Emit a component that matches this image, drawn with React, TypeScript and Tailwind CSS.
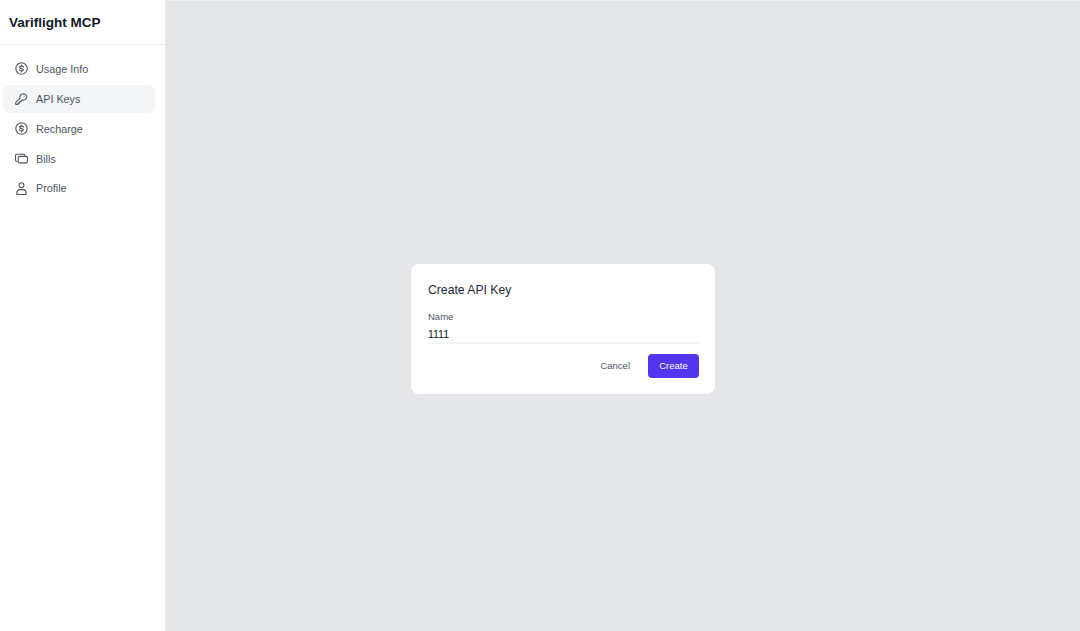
const DollarIcon = () => (
  <svg width="13" height="13" viewBox="0 0 24 24" fill="none" stroke="currentColor" strokeWidth="2" strokeLinecap="round" strokeLinejoin="round">
    <circle cx="12" cy="12" r="10.500" />
    <path strokeWidth="2.200" d="M15.500 9.300c-.5-1.100-1.800-1.800-3.500-1.800-2 0-3.500.9-3.500 2.300 0 3.200 7 1.400 7 4.500 0 1.400-1.500 2.200-3.500 2.200-1.800 0-3.100-.7-3.500-1.900M12 5.500v2M12 16.500v2" />
  </svg>
)

const KeyIcon = () => (
  <svg width="13" height="13" viewBox="0 0 24 24" fill="none" stroke="currentColor" strokeWidth="2" strokeLinecap="round" strokeLinejoin="round">
    <path d="M22 8.500a6.500 6.500 0 0 1-8.400 6.200L11 17.500H8.500v3h-3V23H1.500v-3.800l7.800-7.800A6.500 6.500 0 1 1 22 8.500Z" />
    <path d="M17 7.500h.01" />
  </svg>
)

const CardsIcon = () => (
  <svg width="13" height="13" viewBox="0 0 24 24" fill="none" stroke="currentColor" strokeWidth="2" strokeLinecap="round" strokeLinejoin="round">
    <path d="M4 17H3a2 2 0 0 1-2-2V6a2 2 0 0 1 2-2h13a2 2 0 0 1 2 2v1" />
    <rect x="6" y="8" width="17" height="12" rx="2.500" />
  </svg>
)

const UserIcon = () => (
  <svg width="13" height="13" viewBox="0 0 24 24" fill="none" stroke="currentColor" strokeWidth="2" strokeLinecap="round" strokeLinejoin="round">
    <circle cx="12" cy="6" r="4.500" />
    <path d="M3.500 23v-3a6 6 0 0 1 6-6h5a6 6 0 0 1 6 6v3Z" />
  </svg>
)

const items = [
  { label: "Usage Info", icon: <DollarIcon /> },
  { label: "API Keys", icon: <KeyIcon />, active: true },
  { label: "Recharge", icon: <DollarIcon /> },
  { label: "Bills", icon: <CardsIcon /> },
  { label: "Profile", icon: <UserIcon /> },
]

export default function App() {
  return (
    <div className="flex h-[631px] w-[1080px] overflow-hidden bg-[#e4e6ea] font-['Liberation_Sans',Arial,sans-serif]">
      <aside className="flex w-[166px] shrink-0 flex-col border-r border-[#e9ebee] bg-white">
        <div className="flex h-[45px] items-center border-b border-[#eceef1] pt-[2px] pl-[9px]">
          <h1 className="text-[13.500px] font-bold text-[#111827]">Variflight MCP</h1>
        </div>
        <nav className="flex flex-col gap-[2px] pt-[10px] pr-[10px] pl-[3px]">
          {items.map((item) => (
            <a
              key={item.label}
              className={
                item.active
                  ? "flex h-[27.900px] items-center gap-[8px] rounded-lg bg-[#f4f5f7] pl-[12px] text-[10.800px] text-[#4b5563]"
                  : "flex h-[27.900px] items-center gap-[8px] rounded-lg pl-[12px] text-[10.800px] text-[#4b5563]"
              }
            >
              <span>{item.icon}</span>
              <span>{item.label}</span>
            </a>
          ))}
        </nav>
      </aside>

      <main className="flex flex-1 items-center justify-start border-t border-[#eef0f2] pl-[245px]">
        <div className="mb-[-26px] flex h-[130px] w-[304px] flex-col rounded-lg bg-white pt-[17px] pr-[16px] pl-[17px]">
          <h2 className="text-[12.200px] leading-[18px] text-[#1f2937]">Create API Key</h2>
          <label htmlFor="name" className="mt-[12px] text-[9.500px] leading-[12px] text-[#4b5563]">Name</label>
          <input
            id="name"
            readOnly
            value="1111"
            className="mt-[3px] h-[18px] w-full border-b-2 border-[#f3f4f6] text-[10.500px] text-[#111827] outline-none"
          />
          <div className="mt-[10px] flex items-center justify-end gap-[18px]">
            <button className="text-[9.500px] text-[#4b5563]">Cancel</button>
            <button className="h-[24px] w-[51px] rounded-[4px] bg-[#5235ef] text-[9.500px] text-white">Create</button>
          </div>
        </div>
      </main>
    </div>
  )
}
